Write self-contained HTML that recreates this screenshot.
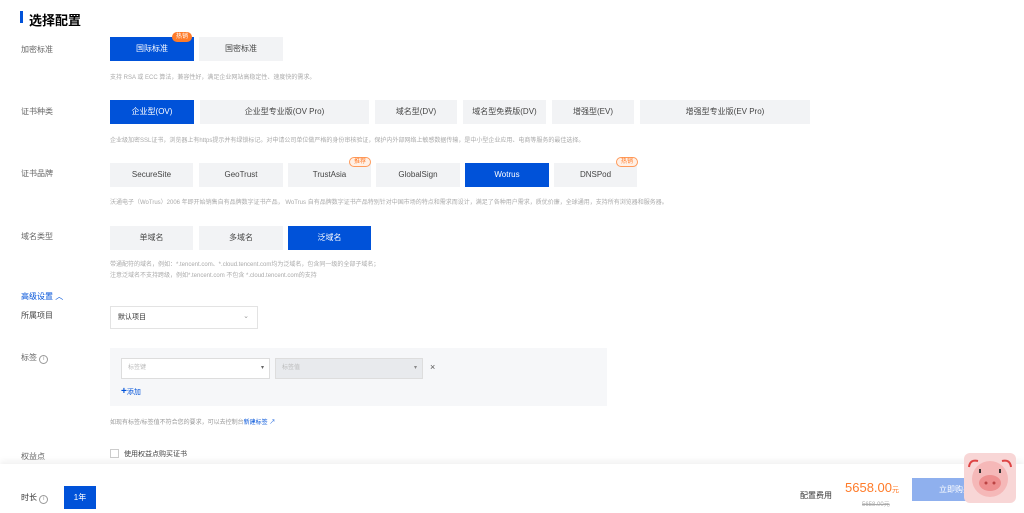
<!DOCTYPE html>
<html><head><meta charset="utf-8"><style>
*{margin:0;padding:0;box-sizing:border-box}
body{width:1024px;height:513px;overflow:hidden;background:#fff;font-family:"Liberation Sans","Noto Sans CJK SC",sans-serif;position:relative;color:#333}
.a{position:absolute;white-space:nowrap}
.t{font-size:13px;font-weight:bold;color:#000}
.l{font-size:8px;color:#666}
.b{position:absolute;height:24px;background:#f2f3f5;color:#444;font-size:8px;text-align:center;line-height:24px}
.s{background:#0052d9;color:#fff}
.d{font-size:6px;color:#aaa;position:absolute;white-space:nowrap}
.tag{position:absolute;height:10px;line-height:10px;padding:0 4px;font-size:6px;color:#fff;background:#ff7b29;border-radius:5px}
.tg2{background:#fff0e6;color:#ff7b29;border:1px solid #ff9a5a;line-height:8px}
</style></head><body>
<div class="a" style="left:20px;top:11px;width:3px;height:12px;background:#0052d9"></div>
<div class="a t" style="left:29px;top:10px">选择配置</div>

<div class="a l" style="left:21px;top:44px">加密标准</div>
<div class="b s" style="left:110px;top:37px;width:84px">国际标准</div>
<div class="b" style="left:199px;top:37px;width:84px">国密标准</div>
<div class="tag" style="left:172px;top:32px">热销</div>
<div class="d" style="left:110px;top:72px">支持 RSA 或 ECC 算法，兼容性好，满足企业网站高稳定性、速度快的需求。</div>

<div class="a l" style="left:21px;top:106px">证书种类</div>
<div class="b s" style="left:110px;top:100px;width:84px">企业型(OV)</div>
<div class="b" style="left:200px;top:100px;width:169px">企业型专业版(OV Pro)</div>
<div class="b" style="left:375px;top:100px;width:82px">域名型(DV)</div>
<div class="b" style="left:463px;top:100px;width:83px">域名型免费版(DV)</div>
<div class="b" style="left:552px;top:100px;width:82px">增强型(EV)</div>
<div class="b" style="left:640px;top:100px;width:170px">增强型专业版(EV Pro)</div>
<div class="d" style="left:110px;top:135px">企业级加密SSL证书，浏览器上有https提示并有绿锁标记。对申请公司单位做严格的身份审核验证，保护内外部网络上敏感数据传输，是中小型企业应用、电商等服务的最佳选择。</div>

<div class="a l" style="left:21px;top:168px">证书品牌</div>
<div class="b" style="left:110px;top:163px;width:83px">SecureSite</div>
<div class="b" style="left:199px;top:163px;width:84px">GeoTrust</div>
<div class="b" style="left:288px;top:163px;width:83px">TrustAsia</div>
<div class="b" style="left:376px;top:163px;width:84px">GlobalSign</div>
<div class="b s" style="left:465px;top:163px;width:84px">Wotrus</div>
<div class="b" style="left:554px;top:163px;width:83px">DNSPod</div>
<div class="tag tg2" style="left:349px;top:157px">推荐</div>
<div class="tag tg2" style="left:616px;top:157px">热销</div>
<div class="d" style="left:110px;top:197px">沃通电子（WoTrus）2006 年即开始销售自有品牌数字证书产品， WoTrus 自有品牌数字证书产品特别针对中国市场的特点和需求而设计，满足了各种用户需求，质优价廉，全球通用，支持所有浏览器和服务器。</div>

<div class="a l" style="left:21px;top:231px">域名类型</div>
<div class="b" style="left:110px;top:226px;width:83px">单域名</div>
<div class="b" style="left:199px;top:226px;width:84px">多域名</div>
<div class="b s" style="left:288px;top:226px;width:83px">泛域名</div>
<div class="d" style="left:110px;top:259px">带通配符的域名，例如：*.tencent.com、*.cloud.tencent.com均为泛域名，包含同一级的全部子域名；</div>
<div class="d" style="left:110px;top:270px">注意泛域名不支持跨级，例如*.tencent.com 不包含 *.cloud.tencent.com的支持</div>

<div class="a" style="left:21px;top:291px;font-size:8px;color:#0052d9">高级设置 ︿</div>
<div class="a l" style="left:21px;top:310px;color:#444">所属项目</div>
<div class="a" style="left:110px;top:306px;width:148px;height:23px;border:1px solid #e3e3e3;font-size:7px;line-height:21px;padding-left:7px;color:#333">默认项目<span style="position:absolute;right:8px;top:-1px;color:#999">⌄</span></div>

<div class="a l" style="left:21px;top:352px">标签 <span style="display:inline-block;width:9px;height:9px;border:1px solid #999;border-radius:50%;font-size:6px;text-align:center;line-height:7px;color:#999">i</span></div>
<div class="a" style="left:110px;top:348px;width:497px;height:58px;background:#f6f7f9"></div>
<div class="a" style="left:121px;top:358px;width:149px;height:21px;background:#fff;border:1px solid #ddd;font-size:6px;color:#bbb;line-height:19px;padding-left:6px">标签键<span style="position:absolute;right:5px;color:#666">▾</span></div>
<div class="a" style="left:275px;top:358px;width:148px;height:21px;background:#e8eaed;border:1px solid #ddd;font-size:6px;color:#bbb;line-height:19px;padding-left:6px">标签值<span style="position:absolute;right:5px;color:#888">▾</span></div>
<div class="a" style="left:430px;top:362px;font-size:9px;color:#555">×</div>
<div class="a" style="left:121px;top:386px;font-size:7px;color:#0052d9"><b style="font-size:10px">+</b>添加</div>
<div class="d" style="left:110px;top:417px;color:#999">如现有标签/标签值不符合您的要求，可以去控制台<span style="color:#0052d9">新建标签 ↗</span></div>

<div class="a l" style="left:21px;top:451px">权益点</div>
<div class="a" style="left:110px;top:449px;width:9px;height:9px;border:1px solid #ccc;background:#fff"></div>
<div class="a" style="left:124px;top:449px;font-size:7px;color:#444">使用权益点购买证书</div>

<div class="a" style="left:0;top:464px;width:1024px;height:49px;background:#fff;box-shadow:0 -3px 6px rgba(0,0,0,.06)"></div>
<div class="a l" style="left:21px;top:492px;color:#333">时长 <span style="display:inline-block;width:9px;height:9px;border:1px solid #999;border-radius:50%;font-size:6px;text-align:center;line-height:7px;color:#999">i</span></div>
<div class="b s" style="left:64px;top:486px;width:32px;height:23px;line-height:23px">1年</div>
<div class="a" style="left:800px;top:490px;font-size:8px;color:#333">配置费用</div>
<div class="a" style="left:845px;top:480px;font-size:13px;color:#ff7b29">5658.00<span style="font-size:7px">元</span></div>
<div class="a" style="left:862px;top:499px;font-size:6px;color:#aaa;text-decoration:line-through">5658.00元</div>
<div class="a" style="left:912px;top:478px;width:100px;height:23px;background:#8fb0ee;color:#fff;font-size:8px;line-height:23px;padding-left:27px">立即购买</div>
<div class="a" style="left:964px;top:453px;width:52px;height:50px;background:#f8d6d6;border-radius:6px">
<svg width="52" height="50" viewBox="0 0 52 50"><path d="M5 14 Q6 6 14 8" stroke="#d44" stroke-width="2" fill="none"/><path d="M47 14 Q46 6 38 8" stroke="#d44" stroke-width="2" fill="none"/><circle cx="26" cy="26" r="18" fill="#f5b8b8"/><ellipse cx="26" cy="30" rx="11" ry="8" fill="#ee8f8f"/><circle cx="22" cy="30" r="1.5" fill="#b44"/><circle cx="30" cy="30" r="1.5" fill="#b44"/><rect x="15" y="16" width="2" height="4" fill="#333"/><rect x="35" y="16" width="2" height="4" fill="#333"/></svg></div>
</body></html>
